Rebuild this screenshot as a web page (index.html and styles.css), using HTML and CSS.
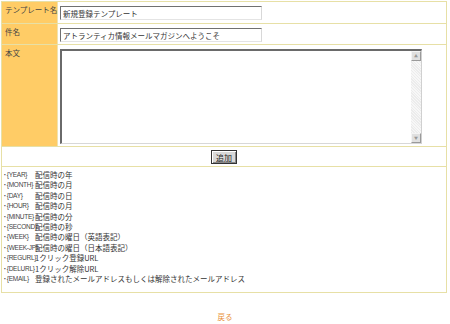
FILE: index.html
```html
<!DOCTYPE html>
<html lang="ja">
<head>
    <meta charset="UTF-8">
    <title>テンプレート編集</title>
    <link rel="stylesheet" href="styles.css">
</head>
<body>
<div class="panel">
    <div class="row row-name">
        <div class="label">テンプレート名</div>
        <div class="field"><input class="text" type="text" value="新規登録テンプレート"></div>
    </div>
    <div class="row row-subject">
        <div class="label">件名</div>
        <div class="field"><input class="text" type="text" value="アトランティカ情報メールマガジンへようこそ"></div>
    </div>
    <div class="row row-body">
        <div class="label">本文</div>
        <div class="field">
            <div class="area">
                <textarea class="area-input"></textarea>
                <div class="scroll">
                    <span class="scroll-btn">&#9650;</span>
                    <span class="scroll-track"></span>
                    <span class="scroll-btn">&#9660;</span>
                </div>
            </div>
        </div>
    </div>
    <div class="row row-submit">
        <button class="btn" type="button">追加</button>
    </div>
    <ul class="tags">
        <li><span class="key">{YEAR}</span><span>配信時の年</span></li>
        <li><span class="key">{MONTH}</span><span>配信時の月</span></li>
        <li><span class="key">{DAY}</span><span>配信時の日</span></li>
        <li><span class="key">{HOUR}</span><span>配信時の月</span></li>
        <li><span class="key">{MINUTE}</span><span>配信時の分</span></li>
        <li><span class="key">{SECOND}</span><span>配信時の秒</span></li>
        <li><span class="key">{WEEK}</span><span>配信時の曜日（英語表記）</span></li>
        <li><span class="key">{WEEK-JP}</span><span>配信時の曜日（日本語表記）</span></li>
        <li><span class="key">{REGURL}</span><span>1クリック登録URL</span></li>
        <li><span class="key">{DELURL}</span><span>1クリック解除URL</span></li>
        <li><span class="key">{EMAIL}</span><span>登録されたメールアドレスもしくは解除されたメールアドレス</span></li>
    </ul>
</div>
<p class="back"><a href="#">戻る</a></p>
</body>
</html>
```

FILE: styles.css
```css
*{
    margin:0;
    padding:0;
    box-sizing: border-box;
}
body{
    background: #fff;
    color: #333;
    font-family: "Noto Sans CJK JP", "Noto Sans", sans-serif;
    font-size: 7.5px;
    line-height: 9px;
}
.panel{
    width: 446px;
    margin: 1px 0 0 1px;
    border: 1px solid #e7e0a6;
}
.row{
    display: flex;
    border-bottom: 1px solid #e7e0a6;
}
.row-name{
    height: 22px;
}
.row-subject{
    height: 21px;
}
.row-body{
    height: 102px;
}
.label{
    width: 56px;
    flex: none;
    background: #fc6;
    border-right: 1px solid #efe3b0;
    padding: 3px 0 0 3px;
    color: #444;
    white-space: nowrap;
}
.field{
    flex: 1;
    padding: 4px 0 0 2px;
}
.text{
    display: block;
    width: 202px;
    height: 14px;
    border: 1px solid;
    border-color: #707070 #d8d8d8 #e4e4e4 #707070;
    padding: 0 2px;
    font: inherit;
    color: #333;
    outline: none;
}
.area{
    display: flex;
    width: 362px;
    height: 95px;
    border: 1px solid;
    border-color: #6a6a6a #d0d0d0 #d8d8d8 #6a6a6a;
    border-top-width: 2px;
    border-left-width: 2px;
}
.area-input{
    flex: 1;
    border: 0;
    resize: none;
    outline: none;
    font: inherit;
}
.scroll{
    width: 10px;
    display: flex;
    flex-direction: column;
    background: #eaeaea;
}
.scroll-btn{
    height: 10px;
    border: 1px solid;
    border-color: #f4f4f4 #9a9a9a #9a9a9a #f4f4f4;
    background: #e0e0e0;
    color: #999;
    font-size: 4px;
    line-height: 8px;
    text-align: center;
}
.scroll-track{
    flex: 1;
    background: repeating-linear-gradient(45deg, #ececec 0 1px, #f7f7f7 1px 2px);
}
.row-submit{
    height: 20px;
    justify-content: center;
    padding-top: 3px;
}
.btn{
    width: 26px;
    height: 14px;
    border: 1px solid #333;
    box-shadow: inset 1px 1px 0 #fff, inset -1px -1px 0 #888;
    background: #d8d8d8;
    font: inherit;
    font-size: 8px;
    line-height: 11px;
    color: #222;
}
.tags{
    list-style: none;
    padding: 3px 0 8px 1px;
}
.tags li{
    display: grid;
    grid-template-columns: 32px auto;
    height: 10.4px;
    line-height: 10.4px;
    white-space: nowrap;
}
.key{
    font-family: "Liberation Sans Narrow", "Liberation Sans", sans-serif;
    font-size: 6.5px;
    letter-spacing: -0.25px;
    color: #444;
}
.key::before{
    content: "･";
    font-family: "Noto Sans CJK JP", sans-serif;
    font-size: 7.5px;
    letter-spacing: 0;
    vertical-align: top;
}
.back{
    margin-top: 19px;
    text-align: center;
}
.back a{
    color: #e8913a;
    text-decoration: none;
}
```
